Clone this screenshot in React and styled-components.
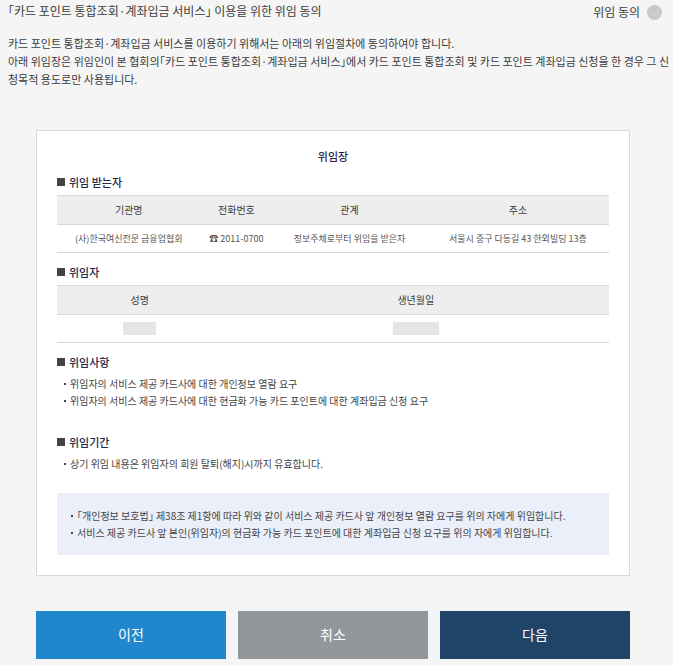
import { useState } from "react";
import styled, { createGlobalStyle } from "styled-components";

const matters = [
    "위임자의 서비스 제공 카드사에 대한 개인정보 열람 요구",
    "위임자의 서비스 제공 카드사에 대한 현금화 가능 카드 포인트에 대한 계좌입금 신청 요구",
];

const periods = ["상기 위임 내용은 위임자의 회원 탈퇴(해지)시까지 유효합니다."];

const notices = [
    "「개인정보 보호법」 제38조 제1항에 따라 위와 같이 서비스 제공 카드사 앞 개인정보 열람 요구를 위의 자에게 위임합니다.",
    "서비스 제공 카드사 앞 본인(위임자)의 현금화 가능 카드 포인트에 대한 계좌입금 신청 요구를 위의 자에게 위임합니다.",
];

function App() {
    //위임 동의 여부, 초기상태는 동의하지 않음
    const [agreed, setAgreed] = useState(false);

    return (
        <Page>
            <GlobalStyle />
            <Header>
                <Title>「카드 포인트 통합조회·계좌입금 서비스」 이용을 위한 위임 동의</Title>
                <AgreeLabel>
                    위임 동의
                    <AgreeCheck type="checkbox" checked={agreed} onChange={() => setAgreed(!agreed)} />
                </AgreeLabel>
            </Header>

            <Intro>
                카드 포인트 통합조회·계좌입금 서비스를 이용하기 위해서는 아래의 위임절차에 동의하여야 합니다.
                <br />
                아래 위임장은 위임인이 본 협회의「카드 포인트 통합조회·계좌입금 서비스」에서 카드 포인트 통합조회 및 카드 포인트
                계좌입금 신청을 한 경우 그 신청목적 용도로만 사용됩니다.
            </Intro>

            <Content>
                {/* 위임장 본문 */}
                <Card>
                    <CardTitle>위임장</CardTitle>

                    <SectionTitle id="receiver">위임 받는자</SectionTitle>
                    <Table aria-labelledby="receiver">
                        <thead>
                            <tr>
                                <Th $width="26%">기관명</Th>
                                <Th $width="13%">전화번호</Th>
                                <Th $width="28%">관계</Th>
                                <Th $width="33%">주소</Th>
                            </tr>
                        </thead>
                        <tbody>
                            <tr>
                                <Td>(사)한국여신전문 금융업협회</Td>
                                <Td>☎ 2011-0700</Td>
                                <Td>정보주체로부터 위임을 받은자</Td>
                                <Td>서울시 중구 다동길 43 한외빌딩 13층</Td>
                            </tr>
                        </tbody>
                    </Table>

                    <SectionTitle id="grantor">위임자</SectionTitle>
                    <Table aria-labelledby="grantor">
                        <thead>
                            <tr>
                                <Th $width="30%">성명</Th>
                                <Th $width="70%">생년월일</Th>
                            </tr>
                        </thead>
                        <tbody>
                            <tr>
                                {/* 개인정보는 가려서 보여줌 */}
                                <Td>
                                    <Masked $width="33px" />
                                </Td>
                                <Td>
                                    <Masked $width="46px" />
                                </Td>
                            </tr>
                        </tbody>
                    </Table>

                    <SectionTitle>위임사항</SectionTitle>
                    <List>
                        {matters.map((text) => (
                            <Item key={text}>{text}</Item>
                        ))}
                    </List>

                    <SectionTitle $spaced>위임기간</SectionTitle>
                    <List>
                        {periods.map((text) => (
                            <Item key={text}>{text}</Item>
                        ))}
                    </List>

                    <Notice>
                        {notices.map((text) => (
                            <Item key={text}>{text}</Item>
                        ))}
                    </Notice>
                </Card>

                <Buttons>
                    <Button type="button" $color="#2187cc">이전</Button>
                    <Button type="button" $color="#92979b">취소</Button>
                    <Button type="button" $color="#204467">다음</Button>
                </Buttons>
            </Content>
        </Page>
    );
}

export default App;

const GlobalStyle = createGlobalStyle`
    * {
        box-sizing: border-box;
    }

    body {
        margin: 0;
        background: #f5f5f5;
        color: #3c3c3c;
        font-family: "Noto Sans CJK KR", sans-serif;
        // 낫표(「」)를 반각 폭으로 표시
        font-feature-settings: "halt";
    }
`;

const Page = styled.main`
    padding: 3px 3px 6px 8px;
`;

const Header = styled.header`
    display: flex;
    justify-content: space-between;
    align-items: flex-start;
    padding-right: 8px;
`;

const Title = styled.h1`
    margin: 0;
    font-size: 12px;
    line-height: 16px;
    font-weight: 400;
`;

const AgreeLabel = styled.label`
    display: flex;
    align-items: center;
    gap: 7px;
    font-size: 12px;
    line-height: 18px;
    cursor: pointer;
`;

const AgreeCheck = styled.input`
    appearance: none;
    display: flex;
    justify-content: center;
    width: 15px;
    height: 15px;
    margin: 0;
    border-radius: 50%;
    background: ${(props) => (props.checked ? "#2187cc" : "#c8c8c8")};
    cursor: pointer;

    &::after {
        content: "";
        width: 4px;
        height: 7px;
        margin-top: 3px;
        border: solid ${(props) => (props.checked ? "#ffffff" : "#d8d8d8")};
        border-width: 0 1px 1px 0;
        transform: rotate(45deg);
    }
`;

const Intro = styled.p`
    margin: 13px 0 42px;
    font-size: 11px;
    line-height: 18px;
    word-break: break-all;
`;

const Content = styled.div`
    padding: 0 40px 0 28px;
`;

const Card = styled.section`
    padding: 16px 20px 20px;
    border: 1px solid #d9d9d9;
    background: #ffffff;
`;

const CardTitle = styled.h2`
    margin: 0 0 8px;
    color: #26264a;
    font-size: 11px;
    line-height: 18px;
    font-weight: 500;
    text-align: center;
`;

const SectionTitle = styled.h3`
    display: flex;
    align-items: center;
    gap: 4px;
    margin: ${(props) => (props.$spaced ? "24px" : "0")} 0 4px;
    color: #26264a;
    font-size: 11px;
    line-height: 18px;
    font-weight: 500;

    &::before {
        content: "";
        width: 8px;
        height: 8px;
        background: #444444;
    }
`;

const Table = styled.table`
    width: 100%;
    margin-bottom: 10px;
    border-collapse: collapse;
    table-layout: fixed;
    text-align: center;
`;

const Th = styled.th`
    width: ${(props) => props.$width};
    height: 29px;
    padding: 0;
    border-top: 1px solid #d9d9d9;
    border-bottom: 1px solid #d9d9d9;
    background: #eeeeee;
    font-size: 10px;
    line-height: 16px;
    font-weight: 400;
`;

const Td = styled.td`
    height: 28px;
    padding: 0;
    border-bottom: 1px solid #d9d9d9;
    color: #555555;
    font-size: 9px;
    line-height: 16px;
    white-space: nowrap;
`;

const Masked = styled.span`
    display: block;
    width: ${(props) => props.$width};
    height: 13px;
    margin: 0 auto;
    background: #e6e4e5;
`;

const List = styled.ul`
    margin: 0;
    padding: 0 0 0 7px;
    list-style: none;
`;

const Item = styled.li`
    display: flex;
    align-items: center;
    gap: 4px;
    color: #444444;
    font-size: 10px;
    line-height: 17px;

    &::before {
        content: "";
        flex: none;
        width: 2px;
        height: 2px;
        background: #444444;
    }
`;

const Notice = styled(List)`
    margin-top: 21px;
    padding: 14px;
    background: #ebeffa;
`;

const Buttons = styled.div`
    display: grid;
    grid-template-columns: repeat(3, 1fr);
    gap: 12px;
    margin-top: 35px;
`;

const Button = styled.button`
    padding: 11px 0 13px;
    border: 0;
    background: ${(props) => props.$color};
    color: #ffffff;
    font-family: inherit;
    font-size: 14px;
    line-height: 24px;
    cursor: pointer;
`;
